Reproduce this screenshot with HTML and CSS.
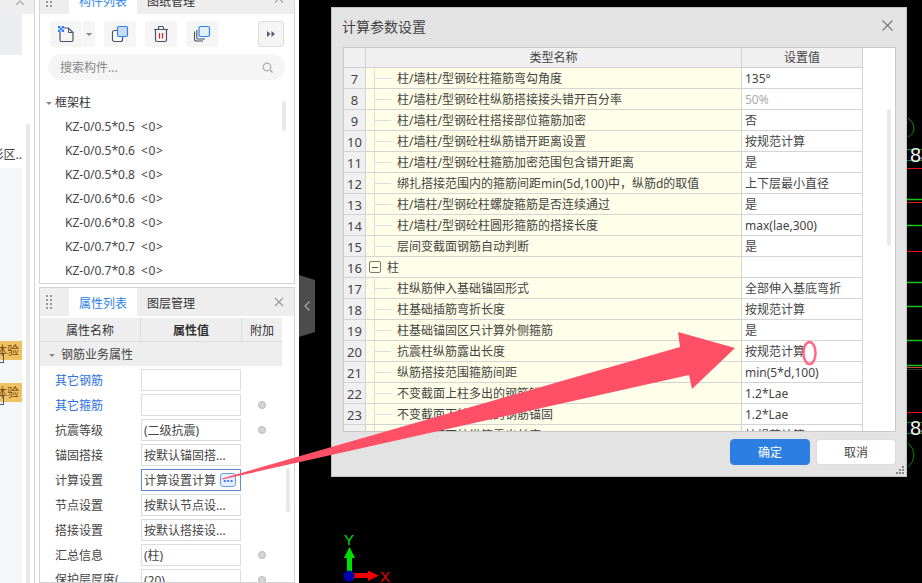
FILE: index.html
```html
<!DOCTYPE html>
<html lang="en">

<head>
    <meta charset="UTF-8">
    <meta name="viewport" content="width=device-width, initial-scale=1.0">
    <title>计算参数设置</title>
    <link rel="stylesheet" href="styles.css">
</head>

<body>
    <div class="strip">
        <div class="strip-main">
            <div class="strip-head">
                <svg class="strip-chevron" width="10" height="5" viewBox="0 0 10 5"><path d="M1 5L5 1L9 5" fill="none" stroke="#aaa" stroke-width="1.2"/></svg>
            </div>
            <div class="strip-body">
                <div class="strip-col">
                    <div class="strip-block"></div>
                    <div class="strip-white"><span>投影区..</span></div>
                    <div class="strip-list">
                        <div class="chip">体验</div>
                        <div class="chip-icon"></div>
                        <div class="chip chip-next">体验</div>
                        <div class="chip-icon"></div>
                    </div>
                </div>
                <div class="strip-scroll"></div>
            </div>
        </div>
    </div>

    <div class="panels">
        <div class="panel panel-top">
            <div class="panel-head">
                <svg class="grip" width="6" height="14" viewBox="0 0 6 14"><path d="M0 0h2v2H0zM4 0h2v2H4zM0 4h2v2H0zM4 4h2v2H4zM0 8h2v2H0zM4 8h2v2H4zM0 12h2v2H0zM4 12h2v2H4z" fill="#999"/></svg>
                <div class="tab tab-active">构件列表</div>
                <div class="tab">图纸管理</div>
                <svg class="head-end" width="10" height="6" viewBox="0 0 10 6"><path d="M1 5.5L5 1.5L9 5.5" fill="none" stroke="#aaa" stroke-width="1.2"/></svg>
            </div>
            <div class="toolbar">
                <div class="tool tool-split">
                    <svg width="18" height="18" viewBox="0 0 18 18">
                        <path d="M3 3H11.5L16 7.5V15a1.5 1.5 0 0 1-1.5 1.5h-10A1.5 1.5 0 0 1 3 15z" fill="none" stroke="#4b5168" stroke-width="1.2"/>
                        <path d="M11.5 3V7.5H16" fill="none" stroke="#4b5168" stroke-width="1"/>
                        <path d="M1 1h2v2H1zM5 1h2v2H5zM3 3h2v2H3zM1 5h2v2H1zM5 5h2v2H5z" fill="#2e80f0"/>
                        <path d="M3 1h2v2H3zM1 3h2v2H1zM5 3h2v2H5zM3 5h2v2H3z" fill="#a9c9f5"/>
                    </svg>
                </div>
                <div class="tool-caret"><span class="caret"></span></div>
                <div class="tool">
                    <svg width="18" height="18" viewBox="0 0 18 18">
                        <rect x="1.5" y="5.5" width="10" height="11" rx="2" fill="#fff" stroke="#4b5168" stroke-width="1.2"/>
                        <rect x="6.5" y="1.5" width="10" height="10" rx="1.5" fill="#c9dcf7" stroke="#2e80f0" stroke-width="1.2"/>
                    </svg>
                </div>
                <div class="tool">
                    <svg width="18" height="18" viewBox="0 0 18 18">
                        <path d="M2 4.5H16M6.5 4.5V2.5a1 1 0 0 1 1-1h3a1 1 0 0 1 1 1v2" fill="none" stroke="#4b5168" stroke-width="1.2"/>
                        <path d="M3.5 4.5V15a1.5 1.5 0 0 0 1.5 1.5h8a1.5 1.5 0 0 0 1.5-1.5V4.5" fill="none" stroke="#4b5168" stroke-width="1.2"/>
                        <path d="M7.5 8V13.5M10.5 8V13.5" fill="none" stroke="#e02020" stroke-width="1.2"/>
                    </svg>
                </div>
                <div class="tool">
                    <svg width="18" height="18" viewBox="0 0 18 18">
                        <path d="M1.5 6.5V14a2 2 0 0 0 2 2H10" fill="none" stroke="#4b5168" stroke-width="1.1"/>
                        <path d="M3.8 5V12.5a1.5 1.5 0 0 0 1.5 1.5H12" fill="none" stroke="#4b5168" stroke-width="1.1"/>
                        <rect x="6" y="1.5" width="10.5" height="10" rx="1.5" fill="#e3f0ff" stroke="#2e80f0" stroke-width="1.2"/>
                    </svg>
                </div>
                <div class="tool-more">
                    <svg width="8" height="6" viewBox="0 0 8 6"><path d="M0 0L3.5 3L0 6zM4.5 0L8 3L4.5 6z" fill="#555a6e"/></svg>
                </div>
            </div>
            <div class="search">
                <span>搜索构件...</span>
                <svg width="11" height="11" viewBox="0 0 11 11"><circle cx="5" cy="5" r="3.8" fill="none" stroke="#aaa" stroke-width="1.2"/><path d="M8 8L10.5 10.5" stroke="#aaa" stroke-width="1.4"/></svg>
            </div>
            <div class="tree">
                <div class="tree-list">
                    <div class="tree-group"><span class="caret"></span>框架柱</div>
                    <div class="tree-row"><span class="tree-name">KZ-0/0.5*0.5</span><span class="tree-count">&lt;0&gt;</span></div>
                    <div class="tree-row"><span class="tree-name">KZ-0/0.5*0.6</span><span class="tree-count">&lt;0&gt;</span></div>
                    <div class="tree-row"><span class="tree-name">KZ-0/0.5*0.8</span><span class="tree-count">&lt;0&gt;</span></div>
                    <div class="tree-row"><span class="tree-name">KZ-0/0.6*0.6</span><span class="tree-count">&lt;0&gt;</span></div>
                    <div class="tree-row"><span class="tree-name">KZ-0/0.6*0.8</span><span class="tree-count">&lt;0&gt;</span></div>
                    <div class="tree-row"><span class="tree-name">KZ-0/0.7*0.7</span><span class="tree-count">&lt;0&gt;</span></div>
                    <div class="tree-row"><span class="tree-name">KZ-0/0.7*0.8</span><span class="tree-count">&lt;0&gt;</span></div>
                </div>
                <div class="tree-scroll"></div>
            </div>
        </div>

        <div class="panel panel-bottom">
            <div class="panel-head">
                <svg class="grip" width="6" height="14" viewBox="0 0 6 14"><path d="M0 0h2v2H0zM4 0h2v2H4zM0 4h2v2H0zM4 4h2v2H4zM0 8h2v2H0zM4 8h2v2H4zM0 12h2v2H0zM4 12h2v2H4z" fill="#999"/></svg>
                <div class="tab tab-active">属性列表</div>
                <div class="tab">图层管理</div>
                <svg class="head-end" width="10" height="10" viewBox="0 0 10 10"><path d="M1 1L9 9M9 1L1 9" fill="none" stroke="#999" stroke-width="1.1"/></svg>
            </div>
            <div class="props-wrap">
                <div class="props">
                    <div class="props-head">
                        <div>属性名称</div>
                        <div class="props-value">属性值</div>
                        <div>附加</div>
                    </div>
                    <div class="props-group"><span class="caret"></span>钢筋业务属性</div>
                    <div class="prop prop-first">
                        <div class="prop-name prop-link">其它钢筋</div>
                        <div class="prop-input"></div>
                        <div></div>
                    </div>
                    <div class="prop">
                        <div class="prop-name prop-link">其它箍筋</div>
                        <div class="prop-input"></div>
                        <div class="prop-add"><span class="dot"></span></div>
                    </div>
                    <div class="prop">
                        <div class="prop-name">抗震等级</div>
                        <div class="prop-input">(二级抗震)</div>
                        <div class="prop-add"><span class="dot"></span></div>
                    </div>
                    <div class="prop">
                        <div class="prop-name">锚固搭接</div>
                        <div class="prop-input">按默认锚固搭...</div>
                        <div></div>
                    </div>
                    <div class="prop">
                        <div class="prop-name">计算设置</div>
                        <div class="prop-input prop-active">计算设置计算<span class="more-btn">...</span></div>
                        <div></div>
                    </div>
                    <div class="prop">
                        <div class="prop-name">节点设置</div>
                        <div class="prop-input">按默认节点设...</div>
                        <div></div>
                    </div>
                    <div class="prop">
                        <div class="prop-name">搭接设置</div>
                        <div class="prop-input">按默认搭接设...</div>
                        <div></div>
                    </div>
                    <div class="prop">
                        <div class="prop-name">汇总信息</div>
                        <div class="prop-input">(柱)</div>
                        <div class="prop-add"><span class="dot"></span></div>
                    </div>
                    <div class="prop">
                        <div class="prop-name prop-last">保护层厚度(...</div>
                        <div class="prop-input">(20)</div>
                        <div class="prop-add"><span class="dot"></span></div>
                    </div>
                </div>
                <div class="props-scroll"></div>
            </div>
        </div>
    </div>

    <div class="canvas">
        <!-- CAD drawing, coordinates are the page's -->
        <svg class="drawing" width="623" height="583" viewBox="299 0 623 583">
            <path d="M908 118Q914 122 914 128Q914 134 908 137M908 443Q914 448 914 455Q914 462 908 467" fill="none" stroke="#0a8a0a"/>
            <path d="M907 149.500H922M907 160.500H922M907 422.500H922M907 433.500H922" stroke="#1c7a1c"/>
            <path d="M907 168.500H922M907 202.500H922M907 251.500H922M907 412.500H922" stroke="#f01010"/>
            <path d="M907 199.500H922M907 225.500H922M907 282.500H922M907 306.500H922M907 340.500H922M907 365.500H922" stroke="#18c018" stroke-width="1.500"/>
            <path d="M907 367.500H922" stroke="#d04040"/>
            <path d="M907 369.500H922" stroke="#333"/>
            <text class="cad-num" x="910" y="162">84</text>
            <text class="cad-num" x="910" y="435">84</text>
            <rect x="347" y="556" width="5" height="18" fill="#00e000"/>
            <path d="M349.500 547L355 558H344z" fill="#00e000"/>
            <rect x="354" y="573" width="15" height="5" fill="#f00000"/>
            <path d="M379 575.500L368 570.500V581z" fill="#f00000"/>
            <circle cx="349" cy="576" r="5.500" fill="#0000b0"/>
            <text class="axis-y" x="344" y="545">Y</text>
            <text class="axis-x" x="380" y="582">X</text>
        </svg>

        <div class="handle">
            <svg width="6" height="10" viewBox="0 0 6 10"><path d="M5.500 0.500L1 5L5.500 9.500" fill="none" stroke="#aaa" stroke-width="1.2"/></svg>
        </div>

        <div class="dialog">
            <div class="dialog-head">
                <span>计算参数设置</span>
                <svg width="11" height="11" viewBox="0 0 11 11"><path d="M0.500 0.500L10.500 10.500M10.500 0.500L0.500 10.500" fill="none" stroke="#777" stroke-width="1.1"/></svg>
            </div>
            <div class="grid-wrap">
                <table class="params">
                    <colgroup>
                        <col class="col-num">
                        <col class="col-name">
                        <col class="col-val">
                    </colgroup>
                    <thead>
                        <tr><th></th><th>类型名称</th><th>设置值</th></tr>
                    </thead>
                    <tbody>
                        <tr><td class="num">7</td><td class="name">柱/墙柱/型钢砼柱箍筋弯勾角度</td><td class="val">135°</td></tr>
                        <tr><td class="num">8</td><td class="name">柱/墙柱/型钢砼柱纵筋搭接接头错开百分率</td><td class="val val-off">50%</td></tr>
                        <tr><td class="num">9</td><td class="name">柱/墙柱/型钢砼柱搭接部位箍筋加密</td><td class="val">否</td></tr>
                        <tr><td class="num">10</td><td class="name">柱/墙柱/型钢砼柱纵筋错开距离设置</td><td class="val">按规范计算</td></tr>
                        <tr><td class="num">11</td><td class="name">柱/墙柱/型钢砼柱箍筋加密范围包含错开距离</td><td class="val">是</td></tr>
                        <tr><td class="num">12</td><td class="name">绑扎搭接范围内的箍筋间距min(5d,100)中，纵筋d的取值</td><td class="val">上下层最小直径</td></tr>
                        <tr><td class="num">13</td><td class="name">柱/墙柱/型钢砼柱螺旋箍筋是否连续通过</td><td class="val">是</td></tr>
                        <tr><td class="num">14</td><td class="name">柱/墙柱/型钢砼柱圆形箍筋的搭接长度</td><td class="val">max(lae,300)</td></tr>
                        <tr><td class="num">15</td><td class="name">层间变截面钢筋自动判断</td><td class="val">是</td></tr>
                        <tr><td class="num">16</td><td class="name-group"><span class="expander"></span>柱</td><td class="val"></td></tr>
                        <tr><td class="num">17</td><td class="name">柱纵筋伸入基础锚固形式</td><td class="val">全部伸入基底弯折</td></tr>
                        <tr><td class="num">18</td><td class="name">柱基础插筋弯折长度</td><td class="val">按规范计算</td></tr>
                        <tr><td class="num">19</td><td class="name">柱基础锚固区只计算外侧箍筋</td><td class="val">是</td></tr>
                        <tr><td class="num">20</td><td class="name">抗震柱纵筋露出长度</td><td class="val">按规范计算</td></tr>
                        <tr><td class="num">21</td><td class="name">纵筋搭接范围箍筋间距</td><td class="val">min(5*d,100)</td></tr>
                        <tr><td class="num">22</td><td class="name">不变截面上柱多出的钢筋锚固</td><td class="val">1.2*Lae</td></tr>
                        <tr><td class="num">23</td><td class="name">不变截面下柱多出的钢筋锚固</td><td class="val">1.2*Lae</td></tr>
                        <tr><td class="num">24</td><td class="name">不变截面下柱纵筋露出长度</td><td class="val">按规范计算</td></tr>
                    </tbody>
                </table>
                <div class="grid-gutter"><div class="grid-thumb"></div></div>
            </div>
            <div class="dialog-foot">
                <button class="btn btn-ok">确定</button>
                <button class="btn">取消</button>
            </div>
            <svg class="resize" width="9" height="9" viewBox="0 0 9 9"><path d="M6 0h2v2H6zM3 3h2v2H3zM6 3h2v2H6zM0 6h2v2H0zM3 6h2v2H3zM6 6h2v2H6z" fill="#888"/></svg>
        </div>
    </div>

    <!-- annotation drawn over the screenshot -->
    <svg class="annotation" width="922" height="583" viewBox="0 0 922 583">
        <path d="M222 478.500L680 347L678 332L735 348L692 389L689 375L222 479.500Z" fill="#ff5068"/>
        <ellipse cx="809.500" cy="353" rx="6" ry="11" fill="none" stroke="#ff6a85" stroke-width="2.500"/>
    </svg>
</body>

</html>
```

FILE: styles.css
```css
* {
    box-sizing: border-box;
}

body {
    margin: 0;
    width: 922px;
    height: 583px;
    overflow: hidden;
    display: flex;
    background: #fff;
    font-family: "Noto Sans", "Noto Sans CJK SC", sans-serif;
    font-size: 12px;
    color: #444;
}

/* left strip */
.strip {
    width: 39px;
    flex: none;
    padding-right: 4px;
}

.strip-main {
    height: 100%;
    display: flex;
    flex-direction: column;
    border-right: 1px solid #d4d4d4;
}

.strip-head {
    height: 14px;
    flex: none;
    background: #eee;
    display: flex;
    align-items: flex-start;
    padding-left: 15px;
}

.strip-body {
    flex: 1;
    display: flex;
}

.strip-col {
    width: 22px;
    display: flex;
    flex-direction: column;
}

.strip-block {
    height: 41px;
    background: #ecedf0;
}

.strip-white {
    height: 113px;
    display: flex;
    justify-content: flex-end;
    white-space: nowrap;
    overflow: hidden;
    padding-top: 92px;
    line-height: 16px;
}

.strip-list {
    flex: 1;
    background: #f5f6f8;
    padding-top: 173px;
}

.chip {
    height: 19px;
    background: #eec163;
    color: #7a4a10;
    line-height: 19px;
    display: flex;
    justify-content: flex-end;
    white-space: nowrap;
    overflow: hidden;
    padding-right: 3px;
}

.chip-next {
    margin-top: 20px;
}

.chip-icon {
    width: 4px;
    height: 10px;
    margin-top: -7px;
    border: 1px solid #556;
    border-left: none;
}

.strip-scroll {
    width: 4px;
    margin: 110px 0 0 4px;
    background: #e9e9e9;
}

/* panels */
.panels {
    width: 260px;
    flex: none;
    height: 598px;
    margin-top: -15px;
    padding-right: 4px;
    display: flex;
    flex-direction: column;
    gap: 3px;
}

.panel {
    border: 1px solid #d4d4d4;
    display: flex;
    flex-direction: column;
    overflow: hidden;
}

.panel-top {
    height: 299px;
    flex: none;
}

.panel-bottom {
    flex: 1;
}

.panel-head {
    height: 28px;
    flex: none;
    background: #eee;
    display: flex;
    align-items: center;
    padding-left: 6px;
    color: #333;
}

.grip {
    margin-right: 17px;
    flex: none;
}

.tab {
    width: 68px;
    height: 100%;
    padding-left: 10px;
    line-height: 31px;
}

.tab-active {
    background: #fff;
    color: #2b7fe8;
}

.head-end {
    margin-left: auto;
    margin-right: 10px;
}

.toolbar {
    display: flex;
    padding: 7px 10px 0;
    height: 40px;
    flex: none;
}

.tool {
    width: 32px;
    height: 26px;
    background: #f5f5f5;
    border-radius: 3px;
    margin-right: 9px;
    display: flex;
    align-items: center;
    justify-content: center;
}

.tool-split {
    margin-right: 1px;
    border-radius: 3px 0 0 3px;
}

.tool-caret {
    width: 12px;
    height: 26px;
    background: #f5f5f5;
    border-radius: 0 3px 3px 0;
    margin-right: 9px;
    display: flex;
    align-items: center;
    justify-content: center;
}

.caret {
    display: inline-block;
    border-left: 3px solid transparent;
    border-right: 3px solid transparent;
    border-top: 3px solid #888;
}

.tool-more {
    width: 26px;
    height: 26px;
    margin-left: auto;
    background: #f5f5f5;
    border: 1px solid #ddd;
    border-radius: 3px;
    display: flex;
    align-items: center;
    justify-content: center;
}

.search {
    height: 26px;
    flex: none;
    margin: 0 9px 0 8px;
    padding: 0 12px;
    border-radius: 13px;
    background: #f5f5f5;
    color: #888;
    display: flex;
    align-items: center;
    justify-content: space-between;
}

.tree {
    flex: 1;
    display: flex;
    margin-top: 10px;
    overflow: hidden;
}

.tree-list {
    flex: 1;
}

.tree-group {
    height: 24px;
    line-height: 25px;
    padding-left: 6px;
    color: #333;
}

.tree-group .caret {
    margin-right: 3px;
    vertical-align: 2px;
}

.tree-row {
    height: 24px;
    line-height: 25px;
    padding-left: 25px;
    display: flex;
}

.tree-name {
    width: 76px;
}

.tree-count {
    letter-spacing: 0.6px;
}

.tree-scroll {
    width: 4px;
    height: 30px;
    margin: 11px 8px 0 0;
    border-radius: 2px;
    background: #e9e9e9;
}

/* properties */
.props-wrap {
    display: flex;
    flex: 1;
    margin-top: 2px;
}

.props {
    width: 242px;
    flex: none;
}

.props-head {
    display: grid;
    grid-template-columns: 101px 101px 40px;
    height: 24px;
    background: #eee;
    border-bottom: 1px solid #ddd;
    text-align: center;
    line-height: 25px;
    color: #333;
}

.props-head > div {
    border-right: 1px solid #ddd;
}

.props-head > div:last-child {
    border-right: none;
}

.props-value {
    font-weight: bold;
}

.props-group {
    height: 24px;
    line-height: 26px;
    background: #eee;
    padding-left: 9px;
    color: #444;
}

.props-group .caret {
    margin-right: 6px;
    vertical-align: 2px;
}

.prop {
    display: grid;
    grid-template-columns: 101px 100px 41px;
    height: 25px;
}

.prop-first {
    margin-top: 2px;
}

.prop-name {
    padding-left: 15px;
    line-height: 26px;
    white-space: nowrap;
    overflow: hidden;
}

.prop-last {
    line-height: 23px;
}

.prop-link {
    color: #2b6fe0;
}

.prop-input {
    height: 22px;
    margin-top: 1px;
    border: 1px solid #ddd;
    padding-left: 2px;
    line-height: 21px;
    white-space: nowrap;
    overflow: hidden;
    display: flex;
}

.prop-active {
    border-color: #5b8fdc;
}

.more-btn {
    width: 16px;
    height: 14px;
    margin: 3px 0 0 4px;
    border: 1px solid #6a9de6;
    border-radius: 3px;
    background: #e6eefb;
    color: #2b6fe0;
    font-weight: bold;
    line-height: 7px;
    text-align: center;
}

.prop-add {
    display: flex;
    justify-content: center;
    padding-top: 8px;
}

.dot {
    width: 8px;
    height: 8px;
    border-radius: 50%;
    background: #d4d4d4;
    border: 1px solid #bbb;
}

.props-scroll {
    width: 4px;
    height: 44px;
    margin: 150px 0 0 4px;
    border-radius: 2px;
    background: #e9e9e9;
}

/* canvas */
.canvas {
    flex: 1;
    position: relative;
    background: #000;
}

.drawing {
    position: absolute;
    left: 0;
    top: 0;
}

.cad-num {
    font-family: "Liberation Sans", sans-serif;
    font-size: 20px;
    fill: #eee;
}

.axis-y,
.axis-x {
    font-family: "Liberation Sans", sans-serif;
    font-size: 15px;
}

.axis-y {
    fill: #00e000;
}

.axis-x {
    fill: #f00000;
}

.handle {
    position: absolute;
    left: 0;
    top: 275px;
    width: 16px;
    height: 62px;
    background: #4c4c4c;
    clip-path: polygon(0 0, 100% 5px, 100% 57px, 0 100%);
    display: flex;
    align-items: center;
    justify-content: center;
}

/* dialog */
.dialog {
    position: absolute;
    left: 32px;
    top: 7px;
    width: 576px;
    height: 470px;
    background: #e3e3e3;
    border: 1px solid #c4c4c4;
    display: flex;
    flex-direction: column;
}

.dialog-head {
    height: 39px;
    flex: none;
    padding: 0 13px 4px 10px;
    display: flex;
    align-items: center;
    justify-content: space-between;
    font-size: 14px;
    color: #444;
}

.grid-wrap {
    width: 553px;
    height: 385px;
    flex: none;
    margin-left: 11px;
    background: #fff;
    border: 1px solid #c8c8c8;
    display: flex;
    overflow: hidden;
}

.params {
    width: 519px;
    flex: none;
    table-layout: fixed;
    border-collapse: separate;
    border-spacing: 0;
    align-self: flex-start;
}

.col-num {
    width: 22px;
}

.col-name {
    width: 376px;
}

.col-val {
    width: 121px;
}

.params th {
    height: 20px;
    padding: 0;
    background: #f0f0f0;
    border-right: 1px solid #cfcfcf;
    border-bottom: 1px solid #cfcfcf;
    font-weight: normal;
    line-height: 18px;
    vertical-align: bottom;
    color: #444;
}

.params td {
    height: 21px;
    padding: 0;
    border-right: 1px solid #d4d4d4;
    border-bottom: 1px solid #d4d4d4;
    line-height: 18px;
    vertical-align: bottom;
    white-space: nowrap;
    overflow: hidden;
}

.params td.num {
    background: #f0f0f0;
    text-align: center;
    font-size: 13px;
}

.params td.name {
    padding-left: 31px;
    background:
        linear-gradient(#ddd, #ddd) 8px 0 / 1px 100% no-repeat,
        linear-gradient(#ddd, #ddd) 9px 10px / 16px 1px no-repeat,
        #fffee8;
}

.params td.name-group {
    padding-left: 21px;
    background: #fffee8;
    position: relative;
}

.expander {
    position: absolute;
    left: 3px;
    top: 4px;
    width: 12px;
    height: 12px;
    border: 1px solid #777;
    border-radius: 2px;
    background: linear-gradient(#555, #555) center / 6px 1px no-repeat;
}

.params td.val {
    padding-left: 3px;
    background: #fff;
}

.params td.val-off {
    color: #aaa;
}

.grid-gutter {
    flex: 1;
}

.grid-thumb {
    width: 4px;
    height: 137px;
    margin: 61px 0 0 24px;
    background: #e9e9e9;
    border-radius: 2px;
}

.dialog-foot {
    display: flex;
    justify-content: flex-end;
    gap: 6px;
    padding: 7px 10px 0 0;
}

.btn {
    width: 80px;
    height: 26px;
    padding: 0;
    background: #fff;
    border: 1px solid #ddd;
    border-radius: 4px;
    font-family: inherit;
    font-size: 12px;
    color: #444;
}

.btn-ok {
    background: #2c7fe0;
    border-color: #2c7fe0;
    color: #fff;
}

.resize {
    position: absolute;
    right: 1px;
    bottom: 1px;
}

.annotation {
    position: absolute;
    left: 0;
    top: 0;
    pointer-events: none;
}
```
